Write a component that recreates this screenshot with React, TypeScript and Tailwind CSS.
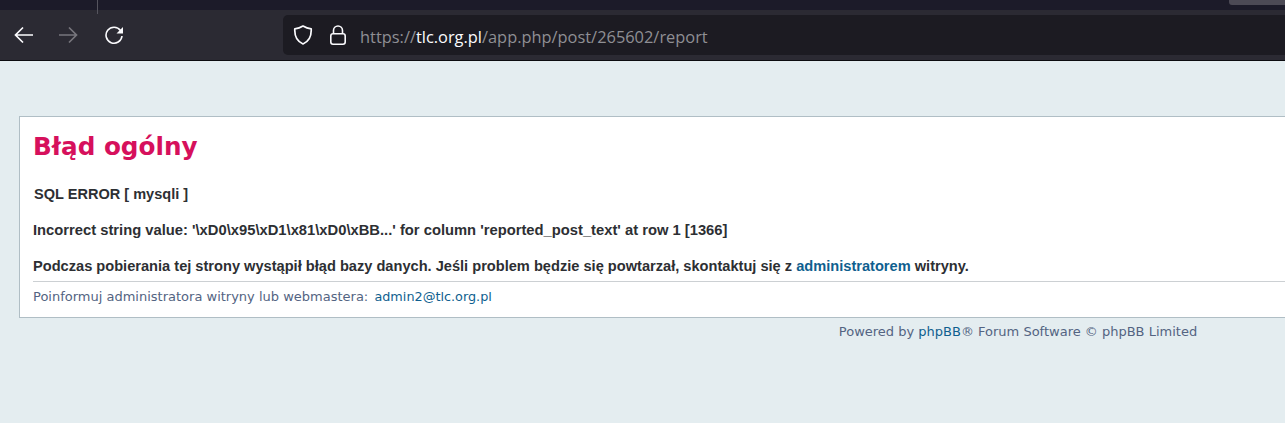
import type { ReactNode } from "react";

function ToolbarIcon({ children, className }: { children: ReactNode; className?: string }) {
  return (
    <svg width="20" height="20" viewBox="0 0 20 20" fill="none" className={className}>
      {children}
    </svg>
  );
}

function BrowserChrome() {
  return (
    <div className="bg-[#2b2a33] font-['Open_Sans',sans-serif]">
      {/* Tab strip, cropped at the top of the shot */}
      <div className="flex h-[10px] bg-[#1c1b29]">
        <div className="h-[14px] w-[98px] border-r border-[#55545e]" />
        <div className="ml-auto h-[5px] w-[56px] rounded-bl-[3px] bg-[#4c4a55]" />
      </div>
      <div className="flex h-[51px] items-start border-b border-[#0c0c10] pt-[5px]">
        <div className="flex h-[40px] w-[283px] items-center pl-[14px]">
          <ToolbarIcon className="text-[#fbfbfe]">
            <path d="M19 10H2M9 2.500 1.500 10 9 17.500" stroke="currentColor" strokeWidth="1.7" />
          </ToolbarIcon>
          <ToolbarIcon className="ml-[24px] text-[#77767d]">
            <path d="M1 10h17M11 2.500l7.500 7.500-7.500 7.500" stroke="currentColor" strokeWidth="1.7" />
          </ToolbarIcon>
          <ToolbarIcon className="ml-[26px] text-[#fbfbfe]">
            <path d="M16.500 5.500A8 8 0 1 0 18 11" stroke="currentColor" strokeWidth="1.6" />
            <path d="M19 2v6.500h-6.500z" fill="currentColor" />
          </ToolbarIcon>
        </div>
        <div className="flex h-[40px] flex-1 items-center rounded-l-[5px] bg-[#1c1b22] pl-[10px]">
          <ToolbarIcon className="text-[#fbfbfe]">
            <path
              d="M10 1c2.700 1.700 5.300 2.500 8.200 2.800.4 7.200-2.200 12.700-8.200 15.200C4 16.500 1.400 11 1.800 3.800 4.700 3.500 7.300 2.700 10 1z"
              stroke="currentColor"
              strokeWidth="1.7"
              strokeLinejoin="round"
            />
          </ToolbarIcon>
          <ToolbarIcon className="ml-[15px] text-[#fbfbfe]">
            <rect x="2.800" y="8.800" width="14.400" height="10.400" rx="2.200" stroke="currentColor" strokeWidth="1.6" />
            <path d="M5.500 8.800V5.500a4.500 4.500 0 0 1 9 0v3.300" stroke="currentColor" strokeWidth="1.6" />
          </ToolbarIcon>
          <div className="ml-[12px] pt-[5px] text-[16.4px] text-[#8f8f94]">
            https://<span className="text-[#fbfbfe]">tlc.org.pl</span>/app.php/post/265602/report
          </div>
        </div>
      </div>
    </div>
  );
}

export default function App() {
  return (
    <div className="h-[423px] w-[1285px] overflow-hidden bg-[#e4edf0]">
      <BrowserChrome />
      <div className="ml-[19px] w-[1998px] pt-[55px]">
        <div className="h-[202px] border border-[#b0bec5] bg-white px-[13px] pt-[12px] font-['Liberation_Sans',sans-serif] font-bold leading-[18px] text-[#2d2f33]">
          <h1 className="font-['DejaVu_Sans',sans-serif] text-[24.700px] leading-[36px] font-bold text-[#d6105c]">
            Błąd ogólny
          </h1>
          <p className="mt-[20px] pl-px text-[14.560px]">SQL ERROR [ mysqli ]</p>
          <p className="mt-[18px] text-[14.760px]">
            Incorrect string value: '\xD0\x95\xD1\x81\xD0\xBB...' for column 'reported_post_text' at row 1 [1366]
          </p>
          <p className="mt-[18px] text-[14.620px]">
            Podczas pobierania tej strony wystąpił błąd bazy danych. Jeśli problem będzie się powtarzał, skontaktuj się z{" "}
            <a className="text-[#0f5f8f]">administratorem</a> witryny.
          </p>
          <div className="mt-[6px] border-t border-[#ccd0d3] pt-[7px] font-['DejaVu_Sans',sans-serif] text-[13px] leading-[16px] font-normal text-[#536482]">
            Poinformuj administratora witryny lub webmastera:{" "}
            <a className="ml-[2px] text-[12.800px] text-[#0f5f8f]">admin2@tlc.org.pl</a>
          </div>
        </div>
        <div className="mt-[6px] text-center font-['DejaVu_Sans',sans-serif] text-[13px] leading-[16px] text-[#536482]">
          Powered by <a className="text-[#0f5f8f]">phpBB</a>® Forum Software © phpBB Limited
        </div>
      </div>
    </div>
  );
}
